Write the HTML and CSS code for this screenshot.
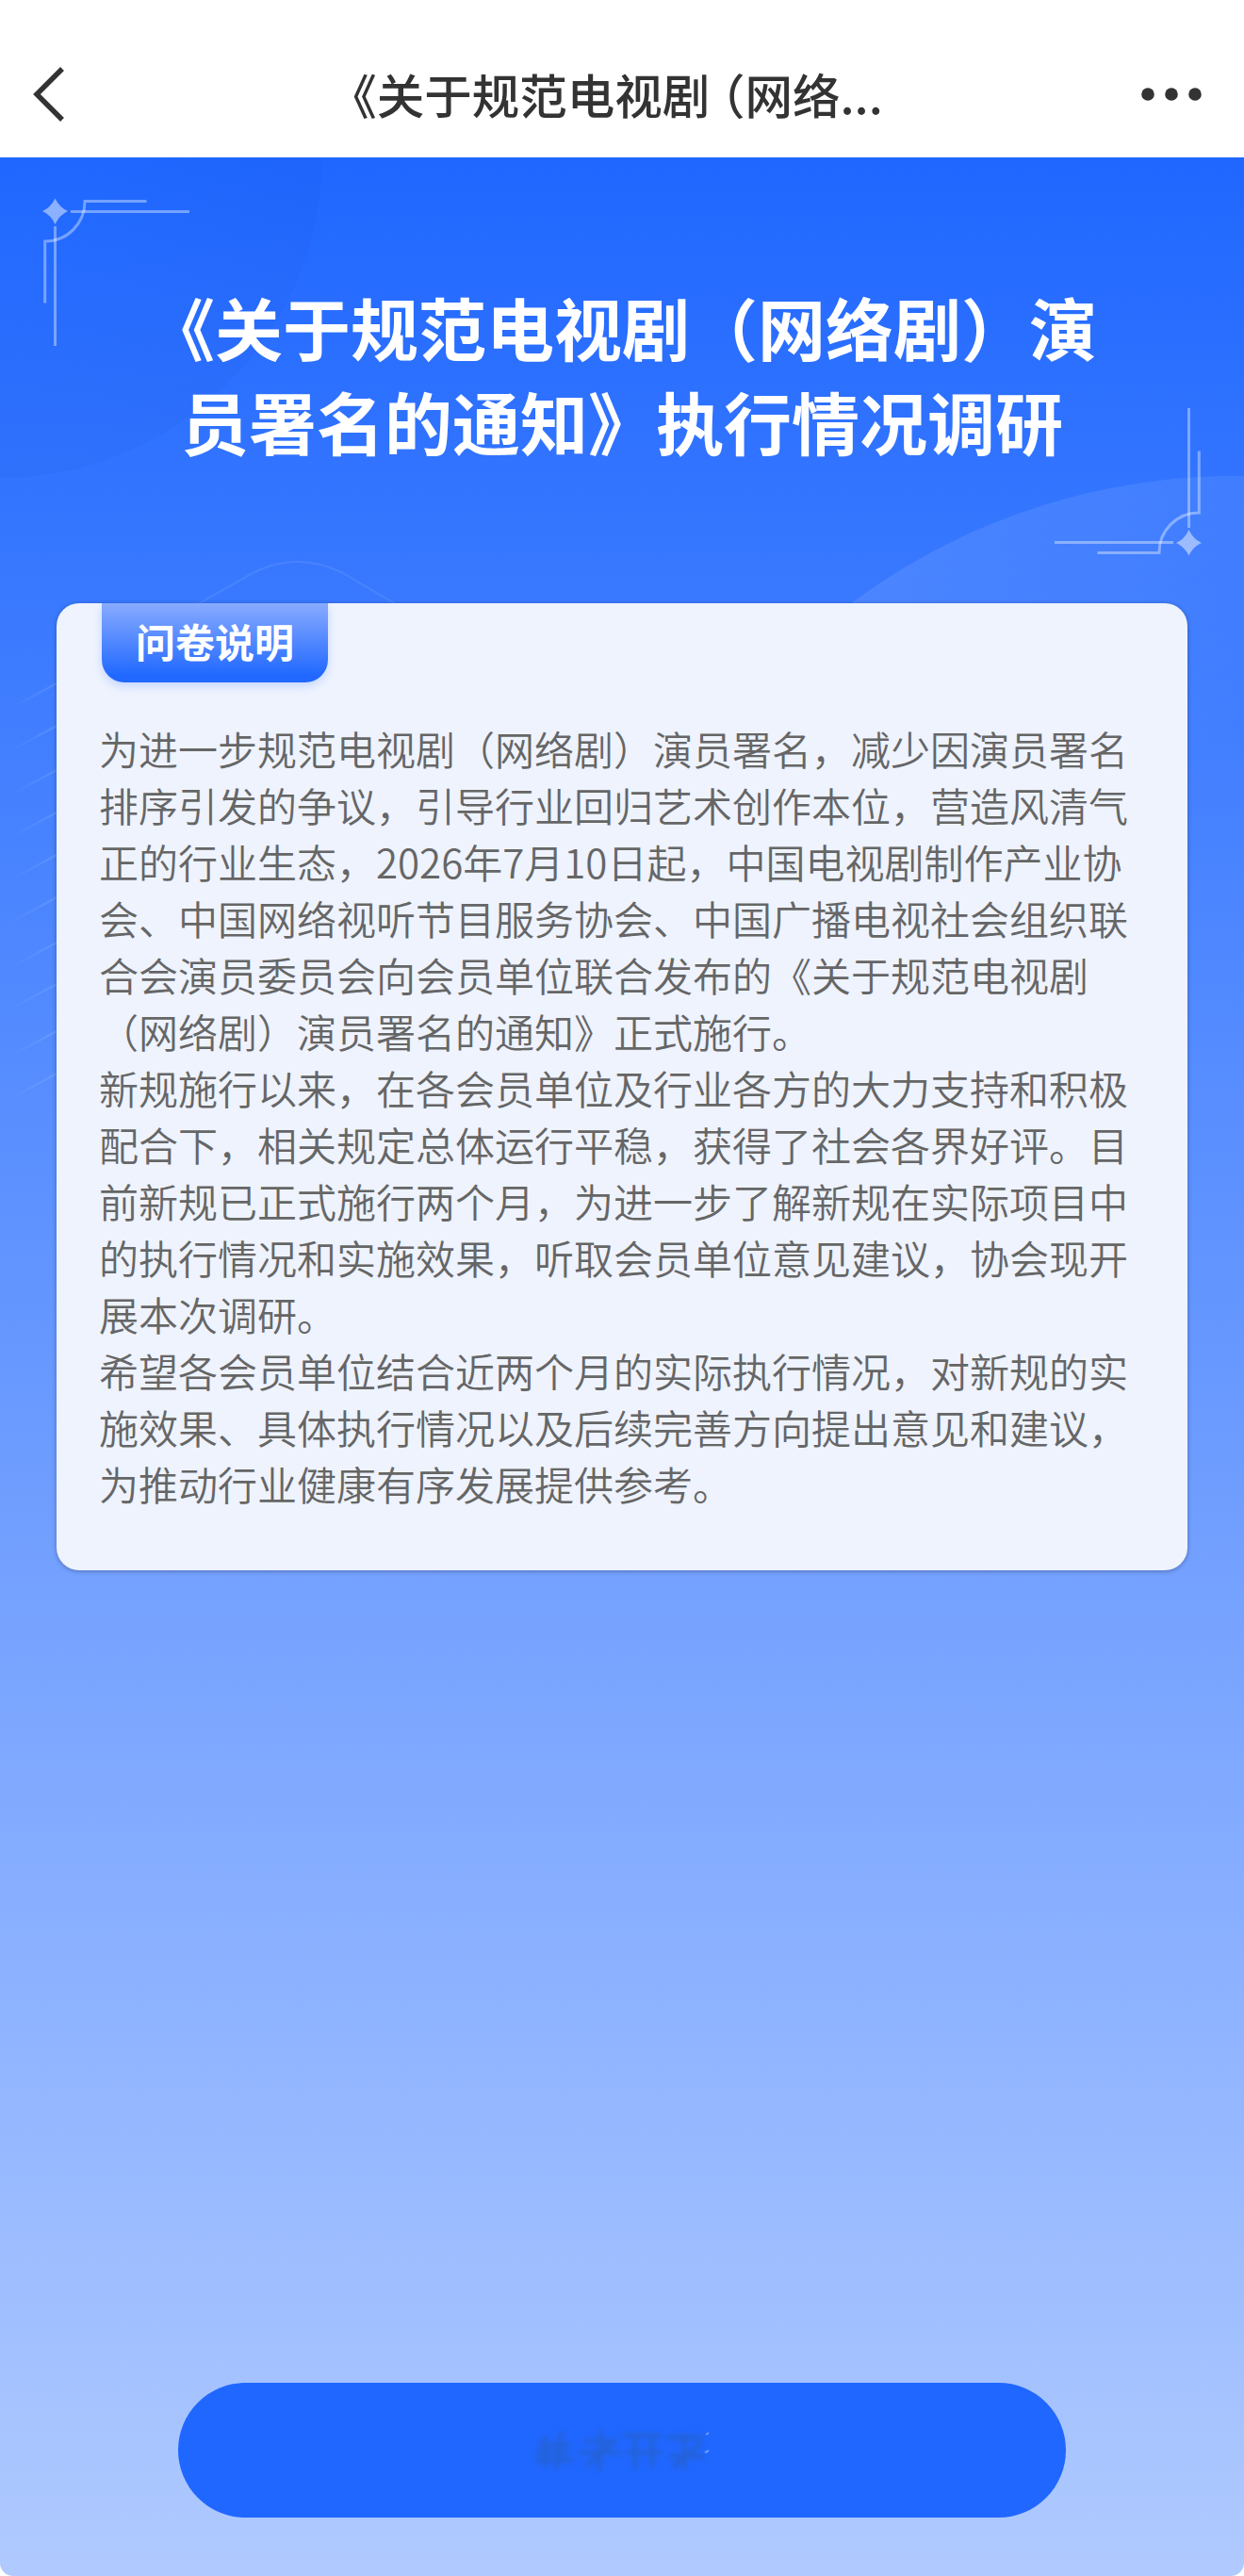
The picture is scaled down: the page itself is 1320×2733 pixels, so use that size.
FILE: index.html
```html
<!DOCTYPE html>
<html lang="zh-CN">
<head>
    <meta charset="UTF-8" />
    <meta name="viewport" content="width=device-width, initial-scale=1" />
    <title>《关于规范电视剧（网络剧）演员署名的通知》执行情况调研</title>
    <link rel="stylesheet" href="styles.css">
</head>
<body>

    <header class="nav-bar">
        <svg class="nav-back" viewBox="0 0 36 60" aria-label="返回">
            <path d="M32 3 L5 30 L32 57" />
        </svg>
        <div class="nav-title">《关于规范电视剧<span class="paren">（</span>网络...</div>
        <svg class="nav-more" viewBox="0 0 66 16" aria-label="更多">
            <circle cx="8" cy="8" r="6.8" />
            <circle cx="33" cy="8" r="6.8" />
            <circle cx="58" cy="8" r="6.8" />
        </svg>
    </header>

    <main class="survey">
        <!-- background shapes, origin is the top of the blue area -->
        <svg class="survey-bg" viewBox="0 0 1320 1200" aria-hidden="true">
            <defs>
                <radialGradient id="discLeft">
                    <stop offset="0.3" stop-color="#1b50d8" stop-opacity="0" />
                    <stop offset="1" stop-color="#1b50d8" stop-opacity="0.1" />
                </radialGradient>
                <linearGradient id="discRight" gradientUnits="userSpaceOnUse" x1="1000" y1="340" x2="1180" y2="680">
                    <stop offset="0" stop-color="#fff" stop-opacity="0.11" />
                    <stop offset="1" stop-color="#fff" stop-opacity="0" />
                </linearGradient>
                <linearGradient id="rayFade" gradientUnits="userSpaceOnUse" x1="10" y1="0" x2="62" y2="0">
                    <stop offset="0" stop-color="#fff" stop-opacity="0" />
                    <stop offset="1" stop-color="#fff" stop-opacity="0.12" />
                </linearGradient>
                <g id="corner">
                    <path class="star" d="M58.5 43.5 Q63 53 72 57 Q63 61 58.5 71 Q54 61 45 57 Q54 53 58.5 43.5 Z" />
                    <path class="rule" d="M75 57.5 H201 M58.5 73 V200" />
                    <path class="rule" d="M155.500 46.500 H90 A42 42 0 0 1 47.700 89 V154.500" />
                </g>
            </defs>
            <circle cx="0" cy="-2" r="342" fill="url(#discLeft)" />
            <circle cx="1310" cy="1018" r="680" fill="url(#discRight)" />
            <path class="wave" d="M208 475 L270 440 Q315 418 362 440 L420 474" />
            <g class="rays">
                <path d="M12 584 L62 557" />
                <path d="M12 629 L62 602" />
                <path d="M12 676 L62 649" />
                <path d="M12 721 L62 694" />
                <path d="M12 766 L62 739" />
                <path d="M12 811 L62 784" />
                <path d="M12 859 L62 832" />
                <path d="M12 903 L62 876" />
                <path d="M12 953 L62 926" />
                <path d="M12 998 L62 971" />
            </g>
            <use href="#corner" />
            <use href="#corner" transform="rotate(180 660 233)" />
        </svg>

        <h1 class="survey-title">《关于规范电视剧（网络剧）演<br>员署名的通知》执行情况调研</h1>

        <section class="card">
            <h2 class="card-tag">问卷说明</h2>
            <div class="card-text">
                <p>为进一步规范电视剧（网络剧）演员署名，减少因演员署名排序引发的争议，引导行业回归艺术创作本位，营造风清气正的行业生态，2026年7月10日起，中国电视剧制作产业协会、中国网络视听节目服务协会、中国广播电视社会组织联合会演员委员会向会员单位联合发布的《关于规范电视剧（网络剧）演员署名的通知》正式施行。</p>
                <p>新规施行以来，在各会员单位及行业各方的大力支持和积极配合下，相关规定总体运行平稳，获得了社会各界好评。目前新规已正式施行两个月，为进一步了解新规在实际项目中的执行情况和实施效果，听取会员单位意见建议，协会现开展本次调研。</p>
                <p>希望各会员单位结合近两个月的实际执行情况，对新规的实施效果、具体执行情况以及后续完善方向提出意见和建议，为推动行业健康有序发展提供参考。</p>
            </div>
        </section>

        <button class="start-btn" type="button" aria-label="开始">
            <svg class="smudge" viewBox="0 0 200 56" aria-hidden="true">
                <g class="smudge-marks">
                    <path d="M8 38 H48 M18 12 V46 M36 8 L30 48 M12 22 H46 M8 30 H44" />
                    <path d="M54 30 H98 M78 6 L76 50 M62 44 L94 16 M60 18 H92" />
                    <path d="M100 12 H142 M114 12 V48 M132 12 V46 M104 30 H142" />
                    <path d="M148 14 H186 M154 46 L184 20 M166 10 V48 M150 34 H188" />
                </g>
                <path class="smudge-dots" d="M189 11 L192 9 M188 30 L192 28" />
            </svg>
        </button>
    </main>

</body>
</html>
```
FILE: styles.css
```css
* {
    box-sizing: border-box;
}
body {
    margin: 0;
    min-height: 2733px;
    display: flex;
    flex-direction: column;
    background: #fff;
    font-family: "Noto Sans CJK SC", sans-serif;
    text-spacing-trim: space-all;
}
h1, h2, p {
    margin: 0;
}

/* top bar */
.nav-bar {
    height: 167px;
    padding: 32px 44px 0 34px;
    display: flex;
    align-items: center;
    justify-content: space-between;
    background: #fff;
    color: #333;
}
.nav-back {
    width: 36px;
    height: 60px;
    fill: none;
    stroke: #333;
    stroke-width: 5.5;
}
.nav-title {
    font-size: 50.5px;
    line-height: 60px;
    padding-bottom: 2px;
    font-weight: 500;
    white-space: nowrap;
    margin-left: 6px;
}
.paren {
    margin-left: 12px;
    font-feature-settings: "halt";
}
.nav-more {
    width: 66px;
    height: 16px;
    fill: #333;
}

/* blue page */
.survey {
    position: relative;
    flex: 1;
    display: flex;
    flex-direction: column;
    align-items: center;
    padding: 129px 60px 62px;
    background: linear-gradient(#1f67ff, #b0caff);
    border-radius: 0 0 14px 14px;
    overflow: hidden;
}
.survey-bg {
    position: absolute;
    top: 0;
    left: 0;
    width: 1320px;
    height: 1200px;
}
.star {
    fill: #fff;
    fill-opacity: 0.48;
}
.rule {
    fill: none;
    stroke: #fff;
    stroke-opacity: 0.38;
    stroke-width: 3;
}
.wave {
    fill: none;
    stroke: #fff;
    stroke-opacity: 0.09;
    stroke-width: 2;
}
.rays {
    fill: none;
    stroke: url(#rayFade);
    stroke-width: 2;
}
.survey-title {
    position: relative;
    font-size: 72px;
    line-height: 100px;
    font-weight: 700;
    color: #fff;
    text-align: center;
    white-space: nowrap;
}

/* description card */
.card {
    position: relative;
    width: 1200px;
    height: 1026px;
    margin-top: 144px;
    padding: 0 46px;
    background: #eef3fe;
    border-radius: 24px;
    box-shadow: 0 1px 5px rgba(0, 0, 0, 0.3);
}
.card-tag {
    width: 240px;
    height: 84px;
    margin-left: 2px;
    font-size: 42px;
    line-height: 80px;
    font-weight: 700;
    text-align: center;
    color: #fff;
    background: linear-gradient(#88abff, #2068ff 92%);
    border-radius: 0 0 24px 24px;
    box-shadow: 0 4px 10px rgba(32, 104, 255, 0.2);
}
.card-text {
    margin-top: 40px;
    margin-left: -1px;
    font-size: 42px;
    line-height: 60px;
    font-weight: 350;
    color: #666;
}

/* bottom button */
.start-btn {
    position: relative;
    display: flex;
    align-items: center;
    justify-content: center;
    width: 942px;
    height: 143px;
    margin-top: auto;
    padding: 0;
    border: none;
    border-radius: 72px;
    background: #2067ff;
    cursor: pointer;
}
.smudge {
    width: 200px;
    height: 56px;
}
.smudge-marks {
    fill: none;
    stroke: #2560cc;
    stroke-width: 5;
    stroke-opacity: 0.75;
    filter: blur(2.5px);
}
.smudge-dots {
    fill: none;
    stroke: #9fc4ff;
    stroke-width: 2;
    stroke-opacity: 0.6;
}
```
